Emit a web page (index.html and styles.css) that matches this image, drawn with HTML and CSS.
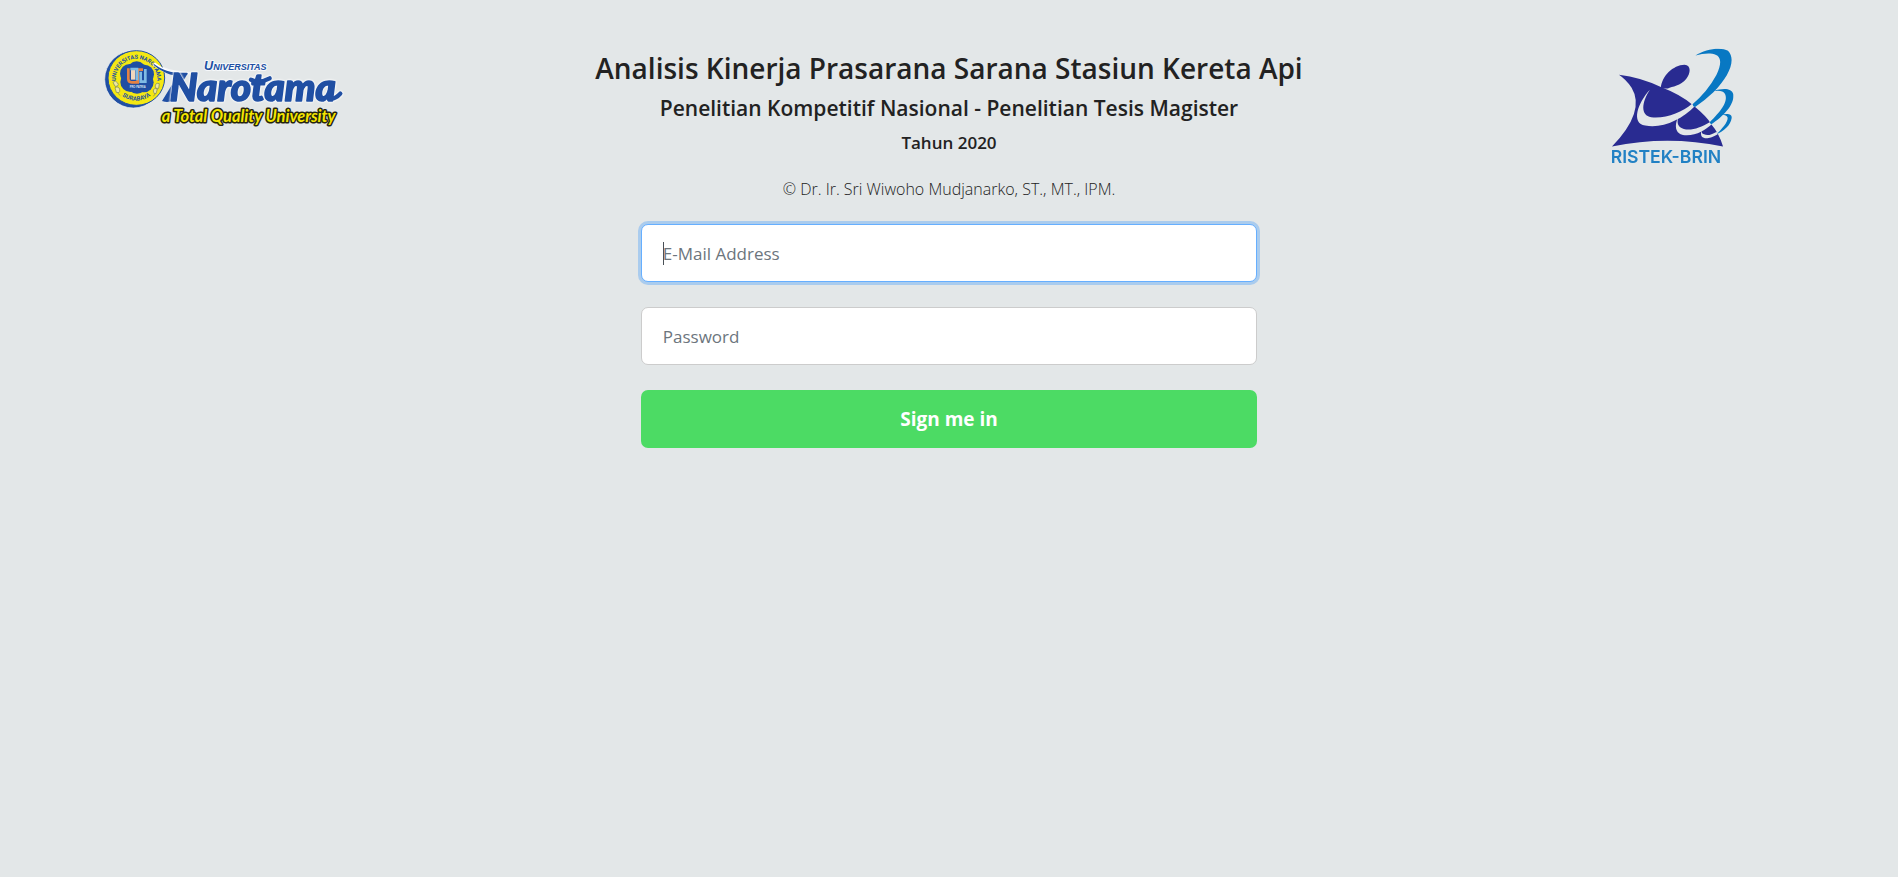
FILE: index.html
```html
<!DOCTYPE html>
<html lang="id">
<head>
<meta charset="utf-8">
<meta name="viewport" content="width=device-width, initial-scale=1">
<title>Analisis Kinerja Prasarana Sarana Stasiun Kereta Api</title>
<link rel="stylesheet" href="styles.css">
</head>
<body>
<div class="page">
  <div class="brand">
    <svg class="logo-narotama" viewBox="40 35 738 240" role="img" aria-label="Universitas Narotama">
      <defs>
        <path id="sealTop" d="M84 155 A62 62 0 1 1 197 155"/>
        <path id="sealBottom" d="M70 123 A70 70 0 0 0 210 123"/>
      </defs>
      <path class="halo" d="M192 84 C214 99 242 109 290 112 L262 134 L222 196"/>
      <ellipse class="seal-shadow" cx="131" cy="129" rx="86" ry="86"/>
      <ellipse class="seal-ring" cx="140" cy="125" rx="85" ry="82"/>
      <circle class="blue" cx="141" cy="104" r="29"/>
      <circle class="blue" cx="120" cy="112" r="29"/>
      <circle class="blue" cx="164" cy="114" r="29"/>
      <circle class="blue" cx="122" cy="137" r="30"/>
      <circle class="blue" cx="162" cy="138" r="30"/>
      <circle class="blue" cx="142" cy="142" r="30"/>
      <text class="seal-text"><textPath href="#sealTop" startOffset="50%" text-anchor="middle">UNIVERSITAS NAROTAMA</textPath></text>
      <text class="seal-text seal-city"><textPath href="#sealBottom" startOffset="50%" text-anchor="middle">SURABAYA</textPath></text>
      <g class="seal-leaf">
        <path d="M70 138q8-8 14 2t-8 10zM76 154q12-6 14 6t-10 8zM209 142q-10-4-12 6t10 8zM203 158q-12-4-12 6t8 8zM84 170l8 8M197 172l-6 8"/>
      </g>
      <path class="u-orange" d="M116 96V128Q116 138 126 138H144V100H160"/>
      <path class="u-pale" d="M124 99H137V130H124Z"/>
      <path class="u-blue" d="M122 98H142V132M153 106V136H167V98"/>
      <text class="seal-motto" x="144" y="156" text-anchor="middle">PRO PATRIA</text>
      <path class="white-line" d="M192 82 C207 94 225 104 244 110"/>
      <path class="blue" d="M192 82 C222 105 250 111 291 109 Q298 110 290 118 L247 191 Q237 202 217 194 L263 119 C233 115 208 101 192 86Z"/>
      <g class="wordmark-group">
        <text class="wordmark" x="240" y="193">Narotama</text>
        <path class="flourish" d="M484 130 Q510 142 540 126M722 187 Q738 188 752 172"/>
      </g>
      <text class="universitas" x="343" y="102">Universitas</text>
      <text class="tagline" x="216" y="257">a Total Quality University</text>
    </svg>
  </div>
  <main class="content">
    <h1 class="title">Analisis Kinerja Prasarana Sarana Stasiun Kereta Api</h1>
    <h2 class="subtitle">Penelitian Kompetitif Nasional - Penelitian Tesis Magister</h2>
    <h3 class="year">Tahun 2020</h3>
    <p class="author">© Dr. Ir. Sri Wiwoho Mudjanarko, ST., MT., IPM.</p>
    <form class="login">
      <input class="field" type="email" placeholder="E-Mail Address" aria-label="E-Mail Address" autofocus>
      <input class="field" type="password" placeholder="Password" aria-label="Password">
      <button class="submit" type="submit">Sign me in</button>
    </form>
  </main>
  <div class="brand">
    <svg class="logo-ristek" viewBox="60 40 370 348" role="img" aria-label="RISTEK-BRIN">
      <path class="navy" d="M84 120 Q150 128 210 157 Q270 180 306 211 Q350 247 361 268 Q386 297 397 336 Q230 301 63 336 Q165 230 122 159 Q106 135 84 120Z"/>
      <path class="navy" d="M210 161 C212 124 247 91 281 90 C302 91 300 116 286 133 C270 153 244 156 231 161Z"/>
      <path class="cut" d="M177 165 C139 206 120 266 163 273 C216 282 272 256 312 215 L303 208 C274 233 224 253 181 248 C149 242 151 204 177 165Z"/>
      <path class="cut" d="M264 243 C247 277 255 302 288 302 C319 302 346 284 364 268 L357 263 C329 280 300 289 279 283 C259 276 257 262 264 243Z"/>
      <path class="cut" d="M333 286 C326 305 336 312 350 311 C366 309 375 303 384 297 L377 292 C361 301 350 304 340 299 C333 297 332 293 333 286Z"/>
      <path class="sky" d="M314 62 C343 43 391 35 412 48 C437 73 417 124 368 173 Q342 198 313 217 Q305 216 306 208 Q350 171 377 121 C398 76 389 58 358 56 Q337 55 314 62Z"/>
      <path class="sky" d="M369 169 C397 160 423 160 428 179 C432 211 397 246 361 270 L357 263 C388 232 414 202 403 178 Q396 165 369 169Z"/>
      <path class="sky" d="M390 241 C408 235 425 237 423 250 C420 272 398 291 378 298 C392 283 411 265 411 249 Q406 239 390 241Z"/>
      <text class="ristek-name" x="59" y="384">RISTEK-BRIN</text>
    </svg>
  </div>
</div>
</body>
</html>
```
FILE: styles.css
```css
* { box-sizing: border-box; }
body {
  margin: 0;
  background: #e3e7e8;
  color: #212529;
  font-family: "Segoe UI", "Open Sans", "Noto Sans", sans-serif;
}
.page {
  display: grid;
  grid-template-columns: 5fr 11fr 5fr;
  padding-top: 48px;
}
.brand { display: flex; justify-content: center; align-items: flex-start; }
.logo-narotama { width: 246px; height: 80px; overflow: visible; }
.logo-ristek { width: 123px; height: 116px; overflow: visible; }
.content { display: flex; flex-direction: column; align-items: center; text-align: center; }
.title, .subtitle, .year, .author { margin: 0; color: #222; }
.title { font-size: 28px; line-height: 40px; font-weight: 600; }
.subtitle { font-size: 21px; line-height: 28px; font-weight: 600; margin-top: 6px; }
.year { font-size: 17px; line-height: 24px; font-weight: 600; margin-top: 9px; }
.author { font-size: 16px; line-height: 24px; font-weight: 300; margin-top: 22px; }
.login { width: 62%; display: flex; flex-direction: column; gap: 25px; margin-top: 23px; }
.field, .submit { width: 100%; height: 58px; border-radius: 7px; font-family: inherit; }
.field {
  padding: 1px 21px 0;
  border: 1px solid #ccc;
  background: #fff;
  color: #495057;
  font-size: 17px;
  outline: none;
}
.field::placeholder { color: #6c757d; opacity: 1; }
.field:focus { border-color: #66afff; box-shadow: 0 0 0 3px rgba(0, 123, 255, .25); }
.field:focus:placeholder-shown {
  caret-color: transparent;
  background: linear-gradient(#495057, #495057) 21px 17px / 1px 23px no-repeat #fff;
}
.submit { border: 0; background: #4cdb64; color: #fff; font-size: 19px; font-weight: 700; }

.blue { fill: #204fa3; }
.halo { fill: none; stroke: #f4f6f8; stroke-width: 12; }
.seal-shadow { fill: #204fa3; stroke: #f4f6f8; stroke-width: 2; }
.seal-ring { fill: #f4e813; stroke: #204fa3; stroke-width: 3; }
.seal-text { fill: #204fa3; font: 700 17px Roboto, sans-serif; }
.seal-city { font-size: 18px; }
.seal-motto { fill: #dce6f4; font: 700 8px "Liberation Sans", sans-serif; }
.seal-leaf { fill: #eee9a0; stroke: #718060; stroke-width: 2; }
.u-orange { fill: none; stroke: #e58243; stroke-width: 8; }
.u-pale { fill: #f1d6bd; }
.u-blue { fill: none; stroke: #80bce4; stroke-width: 8; }
.white-line { fill: none; stroke: #fff; stroke-width: 10; }
.universitas, .wordmark, .tagline { paint-order: stroke; stroke-linejoin: round; }
.universitas {
  fill: #204fa3;
  stroke: #f7f9fb;
  stroke-width: 6;
  font: italic 700 38px "Liberation Sans", sans-serif;
  font-variant-caps: small-caps;
}
.wordmark-group { filter: drop-shadow(0 0 3px #fff) drop-shadow(0 0 2px #fff); }
.wordmark { fill: #204fa3; stroke: #204fa3; stroke-width: 5; font: italic 900 116px Lato, sans-serif; }
.flourish { fill: none; stroke: #204fa3; stroke-width: 13; stroke-linecap: round; }
.tagline { fill: #f4e500; stroke: #25240f; stroke-width: 9; font: italic 700 49px Lato, sans-serif; }
.navy { fill: #292b91; }
.sky { fill: #0878c3; }
.cut { fill: #e3e7e8; }
.ristek-name { fill: #2181c4; font: 600 53px Inter, sans-serif; }
```
